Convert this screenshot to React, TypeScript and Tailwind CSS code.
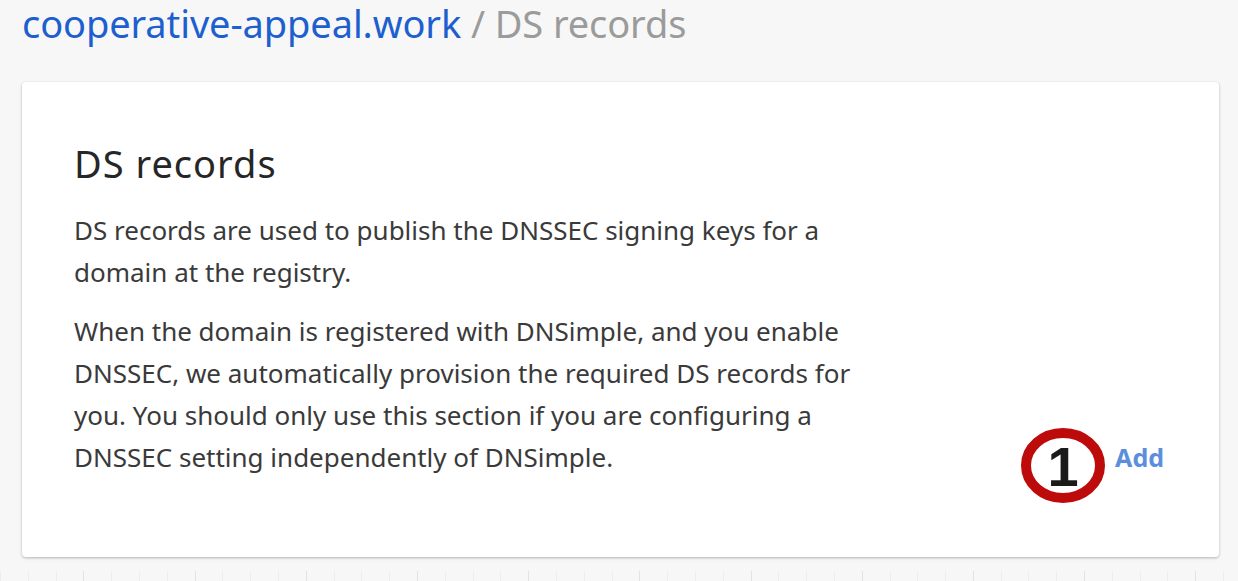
export default function App() {
  const cells = Array.from({ length: 45 })

  return (
    <div
      className="relative w-[1238px] h-[581px] bg-[#f7f7f7] overflow-hidden text-[#333]"
      style={{ fontFamily: '"Noto Sans", "Open Sans", sans-serif' }}
    >
      {/* Breadcrumb */}
      <div className="px-[22px] h-[82px] text-[38px] leading-[46px] tracking-[-0.1px]">
        <a href="#" className="text-[#1d5fcf]">cooperative-appeal.work</a>
        <span className="text-[#9b9b9b]"> / DS records</span>
      </div>

      {/* Card */}
      <div className="relative z-10 ml-[22px] w-[1197px] h-[475px] bg-white rounded-[4px] shadow-[0_1px_3px_rgba(0,0,0,0.28)] pl-[52px] pr-[55px] pt-[56px]">
        <div className="flex items-end justify-between">
          <div className="w-[830px]">
            <h2 className="text-[38px] leading-[50px] tracking-[1px] text-[#262626] mb-[21px]">DS records</h2>
            <p className="text-[26px] leading-[42px] text-[#3a3a3a] mb-[17px]">
              DS records are used to publish the DNSSEC signing keys for a domain at the registry.
            </p>
            <p className="text-[26px] leading-[42px] text-[#3a3a3a]">
              When the domain is registered with DNSimple, and you enable DNSSEC, we automatically provision the
              required DS records for you. You should only use this section if you are configuring a DNSSEC setting
              independently of DNSimple.
            </p>
          </div>
          <div className="flex items-end gap-[10px]">
            <div className="relative w-[84px] h-[75px] mb-[-25px] flex items-center justify-center">
              <svg className="absolute inset-0" width="84" height="75" viewBox="0 0 84 75">
                <ellipse cx="42" cy="37.5" rx="37" ry="32.5" fill="none" stroke="#bd0a0a" strokeWidth="10" />
              </svg>
              <span
                className="relative text-[56px] font-bold text-[#1a1a1a] leading-none mt-[2px]"
                style={{ fontFamily: '"Liberation Sans", Arial, sans-serif' }}
              >
                1
              </span>
            </div>
            <a href="#" className="text-[25px] leading-[42px] font-bold text-[#5b8fdd]">Add</a>
          </div>
        </div>
      </div>

      {/* Faint table grid behind */}
      <div className="absolute left-0 right-0 top-[571px] bottom-0 flex">
        {cells.map((_, i) => (
          <div
            key={i}
            className={`w-[27.8px] shrink-0 border-l ${i % 4 === 3 ? "border-[#e2e2e2]" : "border-[#ededed]"}`}
          />
        ))}
      </div>
    </div>
  )
}
